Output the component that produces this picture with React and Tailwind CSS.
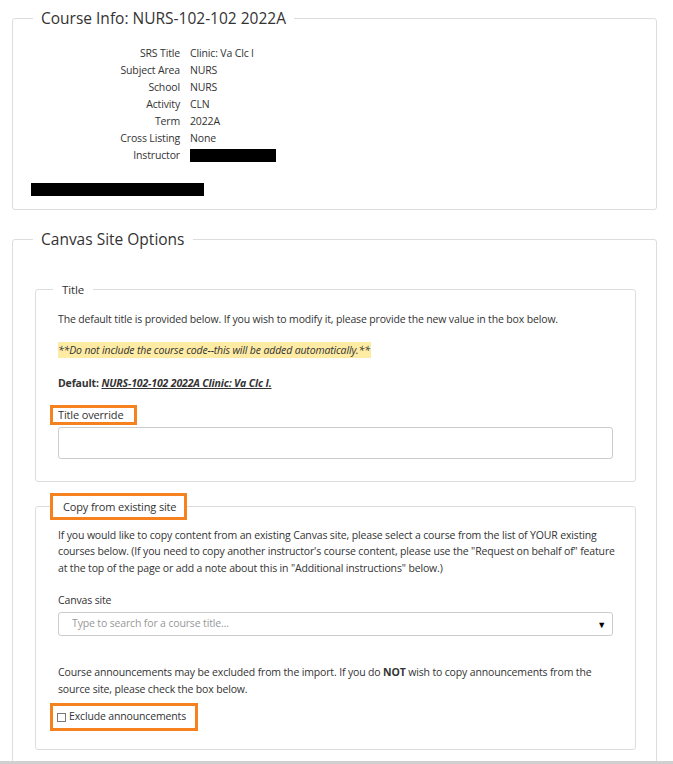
const rows = [
  ['SRS Title', 'Clinic: Va Clc I'],
  ['Subject Area', 'NURS'],
  ['School', 'NURS'],
  ['Activity', 'CLN'],
  ['Term', '2022A'],
  ['Cross Listing', 'None'],
]

function Outlined({ children, className = '' }) {
  return <span className={`border-[3px] border-[#f5821f] ${className}`}>{children}</span>
}

export default function App() {
  return (
    <div className="min-h-[764px] bg-white text-[#333] text-[10.5px] tracking-[-0.15px] font-['Open_Sans',sans-serif] pt-[7px] pl-[12px] pr-[16px]">
      {/* Course info */}
      <fieldset className="min-w-0 border border-[#ddd] rounded-[3px] pl-[20px] pr-[20px] pb-[13px]">
        <legend className="px-[8px] text-[15.5px] tracking-normal leading-[22px]">Course Info: NURS-102-102 2022A</legend>
        <div className="grid grid-cols-[147px_1fr] gap-x-[10px] leading-[17px] mt-[16px]">
          {rows.map(([k, v]) => (
            <div key={k} className="contents">
              <div className="text-right">{k}</div>
              <div>{v}</div>
            </div>
          ))}
          <div className="text-right">Instructor</div>
          <div className="flex items-center">
            <span className="block w-[86px] h-[13px] bg-black" />
          </div>
        </div>
        <div className="ml-[-2px] mt-[19px] w-[173px] h-[13px] bg-black" />
      </fieldset>

      {/* Canvas site options */}
      <fieldset className="min-w-0 mt-[18px] border border-[#ddd] rounded-[3px] pl-[22px] pr-[20px] pb-[20px]">
        <legend className="ml-[-2px] px-[8px] text-[15.5px] tracking-normal leading-[22px]">Canvas Site Options</legend>

        <fieldset className="min-w-0 mt-[31px] border border-[#ddd] rounded-[3px] px-[22px] pb-[22px]">
          <legend className="ml-[-5px] px-[9px] text-[11.5px] leading-[17px]">Title</legend>
          <p className="mt-[13px] leading-[17px]">
            The default title is provided below. If you wish to modify it, please provide the new value in the box below.
          </p>
          <p className="mt-[14px] inline-block bg-[#feeca5] italic leading-[16px] pr-[1px]">
            **Do not include the course code--this will be added automatically.**
          </p>
          <p className="mt-[16px] leading-[17px] font-bold">
            Default: <span className="italic underline">NURS-102-102 2022A Clinic: Va Clc I.</span>
          </p>
          <div className="mt-[13px] ml-[-8px]">
            <Outlined className="inline-block pl-[5px] pr-[11px] leading-[14px] text-[11px]">Title override</Outlined>
          </div>
          <div className="mt-[2px] h-[32px] border border-[#ccc] rounded-[3px]" />
        </fieldset>

        <fieldset className="min-w-0 mt-[11px] border border-[#ddd] rounded-[3px] px-[22px] pb-[18px]">
          <legend className="ml-[-8px] p-0">
            <Outlined className="block pl-[10px] pr-[8px] leading-[21px] text-[11px]">Copy from existing site</Outlined>
          </legend>
          <p className="mt-[7px] leading-[16.5px] whitespace-nowrap">
            If you would like to copy content from an existing Canvas site, please select a course from the list of YOUR existing
            <br />
            courses below. (If you need to copy another instructor's course content, please use the "Request on behalf of" feature
            <br />
            at the top of the page or add a note about this in "Additional instructions" below.)
          </p>
          <p className="mt-[16px] leading-[17px]">Canvas site</p>
          <div className="mt-[3px] h-[24px] border border-[#ccc] rounded-[3px] flex items-center justify-between pl-[13px] pr-[6px]">
            <span className="text-[#999]">Type to search for a course title...</span>
            <span className="text-[9px] text-black">▼</span>
          </div>
          <p className="mt-[28px] leading-[16.5px]">
            Course announcements may be excluded from the import. If you do <b>NOT</b> wish to copy announcements from the
            source site, please check the box below.
          </p>
          <div className="mt-[6px] ml-[-8px]">
            <Outlined className="inline-flex items-center gap-[3px] pl-[4px] pr-[9px] h-[28px]">
              <span className="block w-[9px] h-[9px] border border-[#777] bg-white" />
              <span className="text-[10.5px]">Exclude announcements</span>
            </Outlined>
          </div>
        </fieldset>
      </fieldset>

      <div className="fixed left-0 right-0 bottom-0 h-[3px] bg-[#d0d0d0]" />
    </div>
  )
}
